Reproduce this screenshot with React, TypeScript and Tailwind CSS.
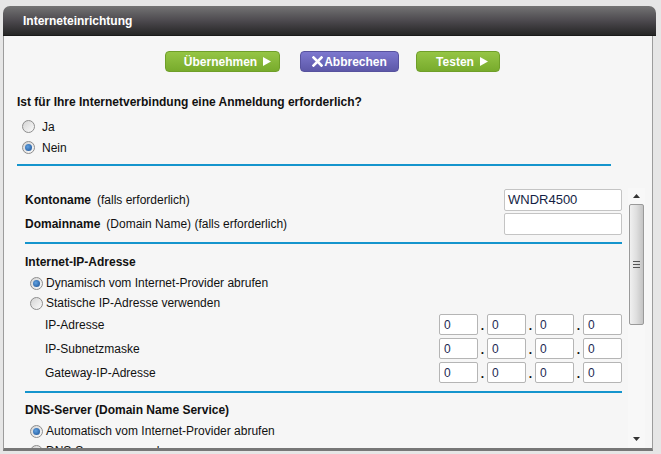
import React from "react";

const font = { fontFamily: '"Liberation Sans", Arial, sans-serif' };

function Radio({ checked }: { checked?: boolean }) {
  return (
    <div className="w-[13px] h-[13px] rounded-full border border-[#8d8d8d] bg-gradient-to-br from-[#d4d4d4] to-[#fbfbfb] flex items-center justify-center shrink-0">
      {checked && (
        <div className="w-[7px] h-[7px] rounded-full bg-[radial-gradient(circle_at_40%_40%,#5fa0e0,#1a4f92)]" />
      )}
    </div>
  );
}

function IpInput() {
  return (
    <div className="w-[39px] h-[21px] bg-white border border-[#b5b5b5] rounded-[2px] pl-[4px] flex items-center text-[12px] text-[#1d2a52]">
      0
    </div>
  );
}

function Dot() {
  return (
    <div className="w-[9px] h-[21px] flex items-end justify-center pb-[3px] text-[12px] font-bold leading-none text-[#111]">.</div>
  );
}

function IpRow({ label }: { label: string }) {
  return (
    <div className="h-[24px] flex items-start">
      <div className="pl-[20px] h-[21px] flex items-center text-[12px] text-[#111]">{label}</div>
      <div className="ml-auto flex items-start">
        <IpInput />
        <Dot />
        <IpInput />
        <Dot />
        <IpInput />
        <Dot />
        <IpInput />
      </div>
    </div>
  );
}

function Triangle() {
  return (
    <svg width="8" height="9" viewBox="0 0 8 9" className="ml-[6px]">
      <path d="M0 0 L8 4.5 L0 9 Z" fill="white" />
    </svg>
  );
}

export default function App() {
  return (
    <div className="w-[661px] h-[454px] bg-[#e6e6e6] overflow-hidden pt-[6px] pl-[3px]" style={font}>
      <div className="w-[653px] h-[30px] rounded-t-[7px] bg-gradient-to-b from-[#747474] via-[#4d4a4f] to-[#262626] flex items-center pl-[20px] text-white font-bold text-[12px] border-b border-[#1a1a1a]">
        Interneteinrichtung
      </div>
      <div className="w-[650px] h-[415px] bg-[#f6f6f6] border-l border-r border-[#9c9c9c] border-b-[3px] border-b-[#777] flex flex-col">
        <div className="mt-[15px] h-[21px] flex items-center pl-[161px]">
          <div className="w-[115px] h-[21px] rounded-[4px] bg-gradient-to-b from-[#95c545] to-[#78ab2c] border border-[#6f9f29] flex items-center justify-center text-white font-bold text-[12px] pl-[10px]">
            Übernehmen<Triangle />
          </div>
          <div className="ml-[20px] w-[99px] h-[21px] rounded-[4px] bg-gradient-to-b from-[#7d78cf] to-[#5d58a8] border border-[#57529e] flex items-center justify-center text-white font-bold text-[12px]">
            <svg width="11" height="11" viewBox="0 0 11 11" className="mr-[1px]">
              <path d="M1.5 1.5 L9.5 9.5 M9.5 1.5 L1.5 9.5" stroke="white" strokeWidth="2.6" strokeLinecap="square" />
            </svg>
            Abbrechen
          </div>
          <div className="ml-[17px] w-[84px] h-[21px] rounded-[4px] bg-gradient-to-b from-[#95c545] to-[#78ab2c] border border-[#6f9f29] flex items-center justify-center text-white font-bold text-[12px] pl-[8px]">
            Testen<Triangle />
          </div>
        </div>

        <div className="mt-[22px] pl-[13px] h-[16px] flex items-center font-bold text-[12px] text-[#111]">
          Ist für Ihre Internetverbindung eine Anmeldung erforderlich?
        </div>
        <div className="mt-[6px] pl-[18px] h-[21px] flex items-center gap-[7px] text-[12px] text-[#111]">
          <Radio />
          <span>Ja</span>
        </div>
        <div className="pl-[18px] h-[21px] flex items-center gap-[7px] text-[12px] text-[#111]">
          <Radio checked />
          <span>Nein</span>
        </div>
        <div className="mt-[6px] ml-[13px] w-[594px] h-[2px] bg-[#1595cd]" />

        <div className="mt-[22px] ml-[13px] flex flex-1 min-h-0">
          <div className="w-[611px] pl-[8px] pr-[6px] pt-[1px] overflow-hidden">
            <div className="h-[24px] flex items-start">
              <div className="h-[22px] flex items-center gap-[6px] text-[12px] text-[#111]">
                <span className="font-bold">Kontoname</span>
                <span>(falls erforderlich)</span>
              </div>
              <div className="ml-auto w-[118px] h-[22px] bg-white border border-[#c4c4c4] rounded-[2px] pl-[3px] flex items-center text-[13px] text-[#141e44]">
                WNDR4500
              </div>
            </div>
            <div className="h-[24px] flex items-start">
              <div className="h-[22px] flex items-center gap-[6px] text-[12px] text-[#111]">
                <span className="font-bold">Domainname</span>
                <span>(Domain Name) (falls erforderlich)</span>
              </div>
              <div className="ml-auto w-[118px] h-[22px] bg-white border border-[#c4c4c4] rounded-[2px]" />
            </div>
            <div className="mt-[5px] h-[2px] bg-[#1595cd]" />
            <div className="mt-[10px] h-[16px] flex items-center font-bold text-[12px] text-[#111]">
              Internet-IP-Adresse
            </div>
            <div className="mt-[3px] h-[20px] pl-[5px] flex items-center gap-[3px] text-[12px] text-[#111]">
              <Radio checked />
              <span>Dynamisch vom Internet-Provider abrufen</span>
            </div>
            <div className="h-[20px] pl-[5px] flex items-center gap-[3px] text-[12px] text-[#111]">
              <Radio />
              <span>Statische IP-Adresse verwenden</span>
            </div>
            <div className="mt-[1px]">
              <IpRow label="IP-Adresse" />
              <IpRow label="IP-Subnetzmaske" />
              <IpRow label="Gateway-IP-Adresse" />
            </div>
            <div className="mt-[5px] h-[2px] bg-[#1595cd]" />
            <div className="mt-[9px] h-[16px] flex items-center font-bold text-[12px] text-[#111]">
              DNS-Server (Domain Name Service)
            </div>
            <div className="mt-[3px] h-[20px] pl-[5px] flex items-center gap-[3px] text-[12px] text-[#111]">
              <Radio checked />
              <span>Automatisch vom Internet-Provider abrufen</span>
            </div>
            <div className="h-[20px] pl-[5px] flex items-center gap-[3px] text-[12px] text-[#111]">
              <Radio />
              <span>DNS-Server verwenden</span>
            </div>
          </div>
          <div className="w-[17px] bg-[#f8f8f8] flex flex-col items-center">
            <svg width="7" height="4" viewBox="0 0 7 4" className="mt-[6px]">
              <path d="M0 4 L3.5 0 L7 4 Z" fill="#333" />
            </svg>
            <div className="mt-[6px] w-[15px] h-[121px] rounded-[2px] border border-[#9a9a9a] bg-gradient-to-r from-[#f0f0f0] via-[#dedede] to-[#c4c4c4] flex flex-col items-center justify-center gap-[2px]">
              <div className="w-[7px] h-[1px] bg-[#555]" />
              <div className="w-[7px] h-[1px] bg-[#555]" />
              <div className="w-[7px] h-[1px] bg-[#555]" />
            </div>
            <div className="flex-1" />
            <svg width="7" height="4" viewBox="0 0 7 4" className="mb-[7px]">
              <path d="M0 0 L7 0 L3.5 4 Z" fill="#333" />
            </svg>
          </div>
        </div>
      </div>
    </div>
  );
}
